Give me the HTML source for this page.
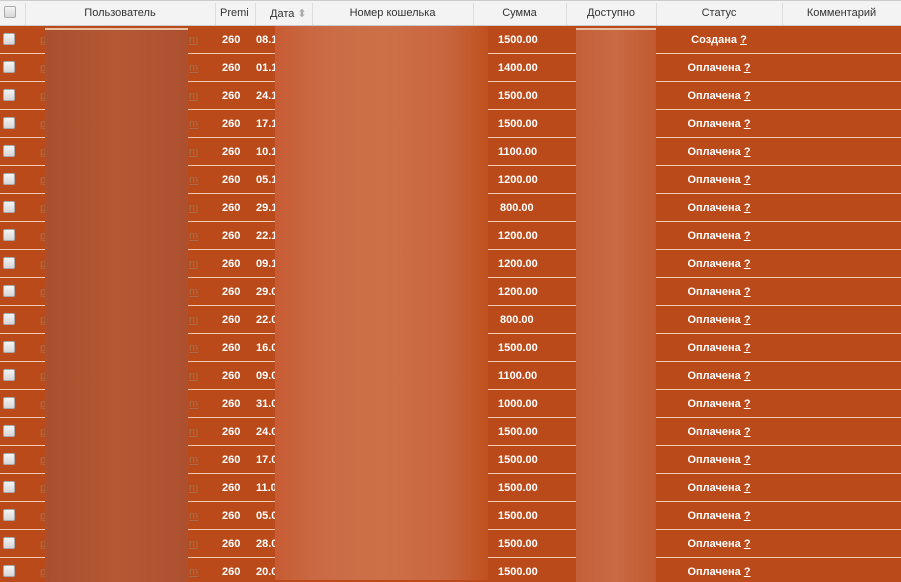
<!DOCTYPE html><html><head><meta charset="utf-8"><style>
*{margin:0;padding:0;box-sizing:border-box}
html,body{width:901px;height:582px;overflow:hidden}
body{background:#bb4a1a;font-family:"Liberation Sans",Arial,sans-serif;font-size:11px;position:relative}
.hd{position:absolute;left:0;top:0;width:901px;height:26px;background:#f3f3f3;border-top:1px solid #ccc;border-bottom:1px solid #ccc;color:#333}
.hd span{position:absolute;top:6px;text-align:center}
.hd i{position:absolute;top:2px;width:1px;height:22px;background:#ddd}
.r{position:absolute;left:0;width:901px;height:28px;border-bottom:1px solid #f2c9b4;color:#fff;font-weight:bold}
.r span{position:absolute;top:8px}
.cb{position:absolute;left:3px;top:7px;width:12px;height:12px;border-radius:2px;background:linear-gradient(#f4f4f4,#d6d6d6);border:1px solid #aaa}
.u{color:#a0704e;font-weight:normal;text-decoration:underline}
.q{text-decoration:underline}
.bl{position:absolute;top:28px;height:554px}
</style></head><body>
<div class="hd">
<div class="cb" style="top:5px;left:4px"></div>
<i style="left:25px"></i><span style="left:25px;width:190px">Пользователь</span>
<i style="left:215px"></i><span style="left:220px">Premi</span>
<i style="left:255px"></i><span style="left:270px">Дата <span style="position:static;color:#aaa">⬍</span></span>
<i style="left:312px"></i><span style="left:312px;width:161px">Номер кошелька</span>
<i style="left:473px"></i><span style="left:473px;width:93px">Сумма</span>
<i style="left:566px"></i><span style="left:566px;width:90px">Доступно</span>
<i style="left:656px"></i><span style="left:656px;width:126px">Статус</span>
<i style="left:782px"></i><span style="left:782px;width:119px">Комментарий</span>
</div>
<div id="rows"></div>
<div class="bl" style="left:45px;width:143px;background:linear-gradient(90deg,#a9502e,#b55834,#ad5030);border-top:2px solid #e8c0a8"></div>
<div class="bl" style="left:275px;width:213px;top:26px;background:linear-gradient(90deg,#c85c34 0,#c96a44 20%,#cd7048 50%,#c86640 80%,#c0501f 100%)"></div>
<div class="bl" style="left:576px;width:80px;background:linear-gradient(90deg,#c4603a,#c86a45,#c25a30);border-top:2px solid #e8c0a8"></div>
<script>
var d=["08.1","01.1","24.1","17.1","10.1","05.1","29.1","22.1","09.1","29.0","22.0","16.0","09.0","31.0","24.0","17.0","11.0","05.0","28.0","20.0"];
var s=[1500,1400,1500,1500,1100,1200,800,1200,1200,1200,800,1500,1100,1000,1500,1500,1500,1500,1500,1500];
var h="";
for(var i=0;i<20;i++){var t=26+28*i;
h+='<div class="r" style="top:'+t+'px"><div class="cb"></div><span class="u" style="left:40px">p</span><span class="u" style="left:189px">m</span><span style="left:222px">260</span><span style="left:256px">'+d[i]+'</span><span style="left:'+(s[i]<1000?500:498)+'px">'+s[i]+'.00</span><span style="left:656px;width:126px;text-align:center">'+(i==0?'Создана':'Оплачена')+' <span class="q" style="position:static">?</span></span></div>';}
document.getElementById("rows").innerHTML=h;
</script>
</body></html>
